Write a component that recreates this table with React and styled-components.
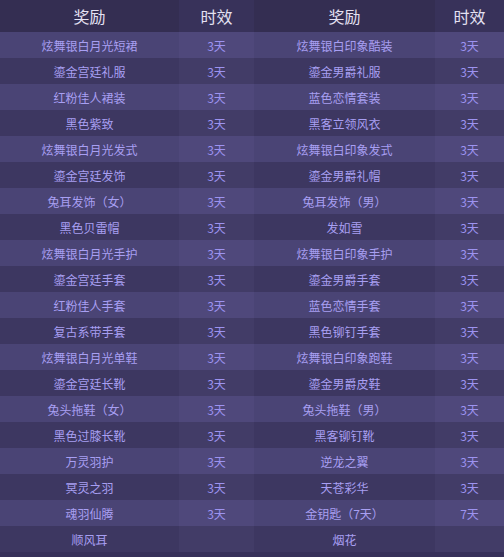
import React from "react";
import styled, { createGlobalStyle } from "styled-components";

const Global = createGlobalStyle`
  html, body { margin: 0; padding: 0; background: #37315a; }
  body { font-family: "Noto Sans CJK SC", "Noto Sans", sans-serif; }
`;

const left = [
  ["炫舞银白月光短裙", "3天"], ["鎏金宫廷礼服", "3天"], ["红粉佳人裙装", "3天"], ["黑色紫致", "3天"],
  ["炫舞银白月光发式", "3天"], ["鎏金宫廷发饰", "3天"], ["兔耳发饰（女）", "3天"], ["黑色贝雷帽", "3天"],
  ["炫舞银白月光手护", "3天"], ["鎏金宫廷手套", "3天"], ["红粉佳人手套", "3天"], ["复古系带手套", "3天"],
  ["炫舞银白月光单鞋", "3天"], ["鎏金宫廷长靴", "3天"], ["兔头拖鞋（女）", "3天"], ["黑色过膝长靴", "3天"],
  ["万灵羽护", "3天"], ["冥灵之羽", "3天"], ["魂羽仙腾", "3天"], ["顺风耳", ""],
];
const right = [
  ["炫舞银白印象酷装", "3天"], ["鎏金男爵礼服", "3天"], ["蓝色恋情套装", "3天"], ["黑客立领风衣", "3天"],
  ["炫舞银白印象发式", "3天"], ["鎏金男爵礼帽", "3天"], ["兔耳发饰（男）", "3天"], ["发如雪", "3天"],
  ["炫舞银白印象手护", "3天"], ["鎏金男爵手套", "3天"], ["蓝色恋情手套", "3天"], ["黑色铆钉手套", "3天"],
  ["炫舞银白印象跑鞋", "3天"], ["鎏金男爵皮鞋", "3天"], ["兔头拖鞋（男）", "3天"], ["黑客铆钉靴", "3天"],
  ["逆龙之翼", "3天"], ["天苍彩华", "3天"], ["金钥匙（7天）", "7天"], ["烟花", ""],
];

const Table = styled.div`
  width: 504px;
  height: 557px;
  display: grid;
  grid-template-columns: 179px 75px 181px 69px;
  grid-auto-rows: 26px;
  grid-template-rows: 32px;
  background: #37315a;
`;

const Head = styled.div`
  display: flex;
  align-items: center;
  justify-content: center;
  font-size: 16px;
  color: #e4e1f2;
  background: ${(p) => (p.$time ? "#38325a" : "#342e52")};
`;

const Cell = styled.div`
  display: flex;
  align-items: center;
  justify-content: center;
  font-size: 12px;
  color: ${(p) => (p.$time ? "#9d93f0" : "#a89ff2")};
  background: ${(p) =>
    p.$light
      ? p.$time ? "#4f487b" : "#4a4475"
      : p.$time ? "#423c67" : "#3d3761"};
`;

export default function App() {
  return (
    <>
      <Global />
      <Table>
        <Head>奖励</Head>
        <Head $time>时效</Head>
        <Head>奖励</Head>
        <Head $time>时效</Head>
        {left.map((l, i) => {
          const r = right[i];
          const light = i % 2 === 0;
          return (
            <React.Fragment key={i}>
              <Cell $light={light}>{l[0]}</Cell>
              <Cell $light={light} $time>{l[1]}</Cell>
              <Cell $light={light}>{r[0]}</Cell>
              <Cell $light={light} $time>{r[1]}</Cell>
            </React.Fragment>
          );
        })}
      </Table>
    </>
  );
}
